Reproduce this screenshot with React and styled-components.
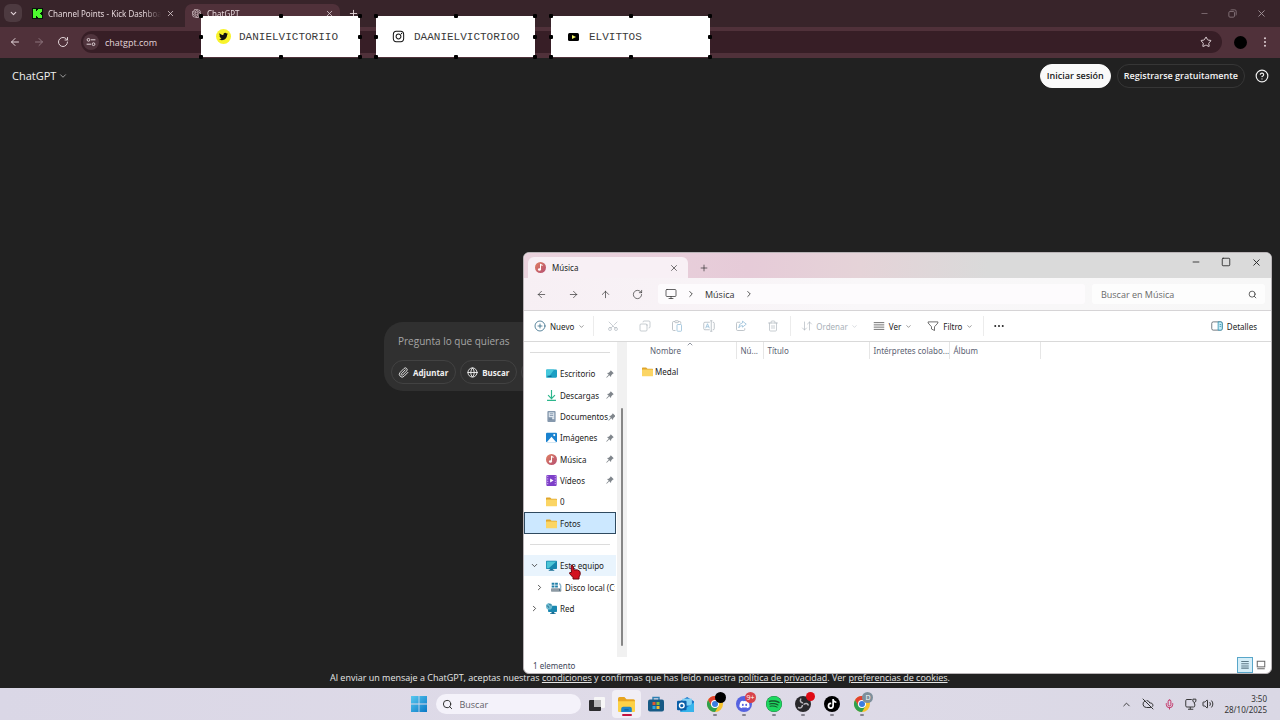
import { useState } from "react";
import styled, { createGlobalStyle, css } from "styled-components";
import {
  ArrowDownUp,
  ArrowLeft,
  ArrowRight,
  ArrowUp,
  ChevronDown,
  ChevronRight,
  ChevronUp,
  CircleHelp,
  CirclePlus,
  CloudOff,
  Copy,
  Globe,
  Lightbulb,
  Mic,
  Minus,
  Monitor,
  Paperclip,
  Plus,
  RotateCw,
  Scissors,
  Search,
  Square,
  Star,
  Trash2,
  Volume2,
  X,
} from "lucide-react";
import {
  FaDiscord,
  FaInstagram,
  FaSpotify,
  FaTiktok,
  FaTwitter,
} from "react-icons/fa";
import { RiOpenaiFill } from "react-icons/ri";

const GlobalStyle = createGlobalStyle`
  * {
    box-sizing: border-box;
  }
  body {
    margin: 0;
    font-family: "Open Sans", "Noto Sans", sans-serif;
    font-size: 8px;
  }
  button, input {
    font: inherit;
    color: inherit;
    border: none;
    background: none;
    padding: 0;
    margin: 0;
  }
  input:focus {
    outline: none;
  }
  svg {
    display: block;
    flex-shrink: 0;
  }
`;

// Noto stays readable at 8px
const smallText = css`
  font-family: "Noto Sans", "Open Sans", sans-serif;
  font-size: 8px;
`;

const Desktop = styled.div`
  position: relative;
  display: flex;
  flex-direction: column;
  min-height: 100vh;
  overflow: hidden;
  background: #212121;
`;

/* ---------- Chrome ---------- */

const TabStrip = styled.div`
  display: flex;
  align-items: flex-end;
  height: 27px;
  padding-left: 4px;
  background: #38242a;
  color: #e3d5d9;
`;

const TabSearch = styled.button`
  display: flex;
  align-items: center;
  justify-content: center;
  width: 18px;
  height: 18px;
  margin: 0 4px 5px 0;
  border-radius: 6px;
  background: #4d3a40;
`;

const BrowserTab = styled.div`
  ${smallText}
  display: flex;
  align-items: center;
  gap: 5px;
  width: ${(props) => (props.$active ? "155px" : "159px")};
  height: 23px;
  padding: 0 ${(props) => (props.$active ? "6px" : "10px")} 4px 6px;
  border-radius: 7px 7px 0 0;
  background: ${(props) => (props.$active ? "#50313a" : "transparent")};

  .title {
    flex: 1;
    overflow: hidden;
    white-space: nowrap;
    mask-image: linear-gradient(90deg, #000 85%, transparent);
  }
  button {
    display: flex;
  }
`;

const NewTab = styled.button`
  display: flex;
  margin: 0 8px 8px;
`;

const WindowButtons = styled.div`
  display: flex;
  align-items: center;
  gap: ${(props) => props.$gap};
  margin-left: auto;
  padding-right: ${(props) => props.$right};
  align-self: center;

  button {
    display: flex;
  }
`;

const ChromeBar = styled.div`
  display: flex;
  align-items: center;
  gap: 12px;
  height: 31px;
  padding: 0 9px 1px;
  background: #50313a;
  color: #e3d5d9;

  > button {
    display: flex;
  }
`;

const Omnibox = styled.label`
  display: flex;
  flex: 1;
  align-items: center;
  gap: 6px;
  height: 22px;
  padding: 0 10px 0 2px;
  border-radius: 11px;
  background: #371e26;
  color: #e3d5d9;
  font-size: 9px;

  .site {
    display: flex;
    align-items: center;
    justify-content: center;
    width: 16px;
    height: 16px;
    border-radius: 50%;
    background: #50343d;
  }
  input {
    flex: 1;
    min-width: 0;
  }
`;

const Avatar = styled.span`
  width: 13px;
  height: 13px;
  border-radius: 50%;
  background: #000;
`;

/* ---------- ChatGPT ---------- */

const ChatPage = styled.main`
  display: flex;
  flex: 1;
  flex-direction: column;
  align-items: center;
  background: #212121;
  color: #f0f0f0;
`;

const ChatHeader = styled.header`
  display: flex;
  align-items: center;
  gap: 6px;
  width: 100%;
  height: 35px;
  padding: 0 11px 0 12px;

  .model {
    display: flex;
    align-items: center;
    gap: 2px;
    margin-right: auto;
    font-size: 11px;
  }
  .help {
    display: flex;
    margin-left: 4px;
  }
`;

const PillButton = styled.button`
  height: 24px;
  padding: 0 6px;
  border: 1px solid ${(props) => (props.$primary ? "#f9f9f9" : "#363636")};
  border-radius: 12px;
  background: ${(props) => (props.$primary ? "#f9f9f9" : "transparent")};
  color: ${(props) => (props.$primary ? "#1a1a1a" : "#f5f5f5")};
  font-size: 9px;
  font-weight: 600;
  white-space: nowrap;
`;

const ChatCenter = styled.div`
  display: flex;
  flex: 1;
  align-items: center;
  justify-content: center;
  width: 100%;
  padding-bottom: 50px;
`;

const Composer = styled.form`
  display: flex;
  flex-direction: column;
  justify-content: space-between;
  width: 40%;
  height: 69px;
  padding: 12px 7px 7px;
  border-radius: 19px;
  background: #303030;

  input {
    width: 100%;
    padding: 0 7px;
    font-size: 10px;
  }
  input::placeholder {
    color: #a5a5a5;
    opacity: 1;
  }
  .actions {
    display: flex;
    gap: 4px;
  }
`;

const ActionButton = styled.button`
  ${smallText}
  display: flex;
  align-items: center;
  gap: 4px;
  height: 24px;
  padding: 0 7px 0 6px;
  border: 1px solid #424242;
  border-radius: 12px;
  color: #f0f0f0;
  font-weight: 700;
`;

const Terms = styled.p`
  margin: 0;
  padding-bottom: 2px;
  font-size: 9px;
  line-height: 16px;
  color: #e6e6e6;

  a {
    color: inherit;
  }
`;

/* ---------- Social labels ---------- */

const Labels = styled.div`
  position: absolute;
  top: 16px;
  left: 201px;
  display: flex;
  gap: 16px;
`;

const Label = styled.div`
  position: relative;
  display: flex;
  align-items: center;
  gap: 8px;
  width: 159px;
  height: 41px;
  padding-left: 15px;
  background: #fff;
  color: #3a3a3a;
  font-family: "Liberation Mono", monospace;
  font-size: 11px;

  .icon {
    display: flex;
    align-items: center;
    justify-content: center;
    width: 15px;
    height: 15px;
    border-radius: 50%;
    background: ${(props) => props.$disc || "transparent"};
    color: #111;
  }
`;

const Handle = styled.span`
  position: absolute;
  left: ${(props) => props.$x};
  top: ${(props) => props.$y};
  width: 4px;
  height: 4px;
  margin: -2px;
  border-radius: 1px;
  background: #000;
`;

/* ---------- Explorer ---------- */

const ExplorerWindow = styled.section`
  ${smallText}
  position: absolute;
  top: 252px;
  left: 523px;
  right: 8px;
  bottom: 46px;
  display: flex;
  flex-direction: column;
  overflow: hidden;
  border: 1px solid #b9b4b7;
  border-radius: 6px;
  background: #fff;
  color: #222;
`;

const TitleBar = styled.div`
  display: flex;
  align-items: flex-end;
  height: 25px;
  padding-left: 4px;
  background: linear-gradient(90deg, #ead3dd, #e6cbd8 30%, #e5d3d8 45%, #dadada 62%);

  > ${WindowButtons} {
    padding-bottom: 7px;
  }
`;

const ExplorerTab = styled.div`
  display: flex;
  align-items: center;
  gap: 6px;
  width: 160px;
  height: 21px;
  margin-right: 11px;
  padding: 0 9px 0 7px;
  border-radius: 6px 6px 0 0;
  background: #f8f0f5;

  button {
    display: flex;
    margin-left: auto;
  }
`;

const PlainButton = styled.button`
  display: flex;
  align-items: center;
  gap: ${(props) => props.$gap || "0"};
  color: ${(props) => (props.$muted ? "#a9b1b8" : "inherit")};
`;

const ExplorerNewTab = styled(PlainButton)`
  margin-bottom: 5px;
`;

const AddressRow = styled.div`
  display: flex;
  align-items: center;
  height: 33px;
  padding: 0 6px 0 12px;
  background: linear-gradient(90deg, #f7eff4, #f9f7f9 45%, #f7f7f7);
  border-bottom: 1px solid #d6d4d6;
  color: #333;

  > button {
    margin-right: 21px;
  }
`;

const Path = styled.nav`
  display: flex;
  flex: 1;
  align-items: center;
  gap: 9px;
  height: 20px;
  padding-left: 7px;
  margin-right: 7px;
  margin-left: -6px;
  border-radius: 3px;
  background: #fdfbfd;
  font-family: "Open Sans", "Noto Sans", sans-serif;
  font-size: 9px;
`;

const SearchField = styled.label`
  display: flex;
  align-items: center;
  width: 173px;
  height: 20px;
  padding: 0 8px 0 9px;
  border-radius: 3px;
  background: #fdfdfd;
  font-family: "Open Sans", "Noto Sans", sans-serif;
  font-size: 9px;

  input {
    flex: 1;
    min-width: 0;
  }
  input::placeholder {
    color: #6b6b6b;
    opacity: 1;
  }
`;

const CommandBar = styled.div`
  display: flex;
  align-items: center;
  height: 31px;
  padding: 0 14px 0 10px;
  border-bottom: 1px solid #d9d9d9;

  .tools {
    display: flex;
    gap: 20px;
    padding: 0 11px 0 13px;
  }
  .menus {
    display: flex;
    gap: 15px;
    padding: 0 10px;
  }
  .more {
    margin-left: 9px;
  }
  .details {
    margin-left: auto;
  }
`;

const Divider = styled.span`
  width: 1px;
  height: 20px;
  margin-left: ${(props) => props.$space || "0"};
  background: #ececec;
`;

const ExplorerBody = styled.div`
  display: flex;
  flex: 1;
  min-height: 0;
`;

const Tree = styled.ul`
  display: grid;
  grid-auto-rows: 1fr;
  width: 92px;
  height: 277px;
  margin: 0 1px 0 0;
  padding: 0;
  list-style: none;
`;

const TreeItem = styled.li`
  display: flex;
  align-items: center;
  gap: 3px;
  overflow: hidden;
  white-space: nowrap;
  padding-left: ${(props) => (props.$child ? "10px" : "5px")};
  border: 1px solid transparent;

  .arrow {
    flex-shrink: 0;
    width: 13px;
  }
  .pin {
    margin-left: auto;
    margin-right: 1px;
  }
  ${(props) =>
    props.$tight &&
    css`
      .pin {
        margin-left: -3px;
      }
    `}
  ${(props) =>
    props.$selected &&
    css`
      background: #cce8ff;
      border-color: #2f4a60;
    `}
  ${(props) =>
    props.$hover &&
    css`
      background: #e9f4fd;
    `}
`;

const TreeLine = styled.li`
  align-self: center;
  height: 1px;
  margin: 0 6px;
  background: #dcdcdc;
`;

const Scrollbar = styled.div`
  display: flex;
  justify-content: center;
  width: 10px;
  padding: 66px 0 11px;
  background: #f1f1f1;

  span {
    width: 2px;
    border-radius: 1px;
    background: #868686;
  }
`;

const Files = styled.div`
  flex: 1;
  min-width: 0;
`;

const FileTable = styled.table`
  width: 413px;
  table-layout: fixed;
  border-collapse: collapse;

  th {
    position: relative;
    height: 17px;
    padding: 0 4px;
    border-right: 1px solid #e6e6e6;
    color: #5b6272;
    font-weight: 400;
    text-align: left;
    white-space: nowrap;
  }
  th:first-child {
    padding-left: 23px;
  }
  th svg {
    position: absolute;
    top: -2px;
    left: 59px;
  }
  td {
    height: 24px;
    padding: 0 0 0 15px;
  }
  td span {
    display: flex;
    align-items: center;
    gap: 2px;
  }
`;

const StatusBar = styled.div`
  display: flex;
  align-items: center;
  height: 16px;
  padding: 0 2px 0 9px;
  color: #3d4658;

  button {
    display: flex;
    align-items: center;
    justify-content: center;
    width: 16px;
    height: 16px;
  }
  button.on {
    margin-left: auto;
    border: 1px solid #58a6c9;
    background: #d5eef8;
  }
`;

const Pointer = styled.svg`
  position: absolute;
  top: 564px;
  left: 568px;
`;

/* ---------- Taskbar ---------- */

const Taskbar = styled.footer`
  display: grid;
  grid-template-columns: 1fr auto 1fr;
  align-items: center;
  height: 32px;
  background: linear-gradient(90deg, #dad7e6, #dfdbe8 50%, #dad8e5);
  color: #333;
`;

const TaskCenter = styled.div`
  grid-column: 2;
  display: flex;
  align-items: center;
  gap: 9px;

  > button {
    display: flex;
    margin-left: 7px;
  }
`;

const TaskSearch = styled.label`
  display: flex;
  align-items: center;
  gap: 7px;
  width: 145px;
  height: 20px;
  padding: 0 6px;
  border-radius: 10px;
  background: #f4f2fa;
  font-size: 9px;

  input {
    flex: 1;
    min-width: 0;
  }
  input::placeholder {
    color: #5f5f66;
    opacity: 1;
  }
`;

const Apps = styled.div`
  display: grid;
  grid-template-columns: repeat(10, 1fr);
  width: 294px;
  margin-left: -7px;
`;

const AppButton = styled.button`
  position: relative;
  display: flex;
  align-items: center;
  justify-content: center;
  height: 28px;
  border-radius: 4px;
  background: ${(props) => (props.$open ? "#f1eff6" : "transparent")};

  &::after {
    content: "";
    position: absolute;
    bottom: 2px;
    left: 50%;
    width: ${(props) => (props.$open ? "10px" : "4px")};
    height: 2px;
    transform: translateX(-50%);
    border-radius: 1px;
    background: ${(props) =>
      props.$open ? "#c4143f" : props.$running ? "#85828e" : "transparent"};
  }
`;

const Badge = styled.span`
  position: absolute;
  top: 2px;
  right: 3px;
  width: ${(props) => props.$size || "11px"};
  height: ${(props) => props.$size || "11px"};
  border-radius: 50%;
  background: ${(props) => props.$color};
  color: #fff;
  font-size: 7px;
  line-height: 11px;
  text-align: center;
`;

const Disc = styled.span`
  display: flex;
  align-items: center;
  justify-content: center;
  width: 16px;
  height: 16px;
  border-radius: 50%;
  background: ${(props) => props.$color};
  color: ${(props) => props.$ink || "#fff"};
`;

const Tray = styled.div`
  display: flex;
  align-items: center;
  justify-content: flex-end;
  gap: 10px;
  padding-right: 13px;

  time {
    ${smallText}
    line-height: 11px;
    text-align: right;
    white-space: pre-line;
  }
  .pair {
    display: flex;
    gap: 5px;
  }
`;

/* ---------- Drawings ---------- */

const Svg = ({ size = 11, children }) => (
  <svg width={size} height={size} viewBox="0 0 16 16" fill="none" aria-hidden="true">
    {children}
  </svg>
);

const FolderIcon = () => (
  <Svg>
    <path d="M0 3q0-1 1-1h5l2 2h7q1 0 1 1v3H0z" fill="#e0a62c" />
    <rect y="5" width="16" height="10" rx="1" fill="#fbd564" />
  </Svg>
);

const DesktopIcon = () => (
  <Svg>
    <rect y="2" width="16" height="12" rx="1.500" fill="#1a9fc4" />
    <path d="M0 3.500Q0 2 1.500 2H12L3 14H1.500Q0 14 0 12.500z" fill="#45c8dc" />
    <path d="M2 12h6" stroke="#0b5c88" strokeWidth="1.500" />
  </Svg>
);

const DownloadIcon = () => (
  <Svg>
    <path d="M8 0v12M3 7.500L8 12.500L13 7.500M1.500 15.200H14.500" stroke="#2cb68c" strokeWidth="1.700" />
  </Svg>
);

const DocumentIcon = () => (
  <Svg>
    <rect x="2" width="12" height="16" rx="1.500" fill="#8598ad" />
    <rect x="4" y="2" width="8" height="7" fill="#dfe7ef" />
    <path d="M5.500 4h5M5.500 6.500h5M4.500 12h7" stroke="#6b8099" />
    <rect x="9" y="9" width="3" height="3" fill="#dfe7ef" />
  </Svg>
);

const ImageIcon = () => (
  <Svg>
    <rect y="1" width="16" height="14" rx="1.500" fill="#1a82cf" />
    <path d="M1 15L8 7L15 15z" fill="#fff" />
    <circle cx="12" cy="4.500" r="1.500" fill="#fff" />
  </Svg>
);

const MusicIcon = () => (
  <Svg>
    <defs>
      <linearGradient id="music" x1="0" y1="0" x2="1" y2="1">
        <stop offset="0" stopColor="#e08062" />
        <stop offset="1" stopColor="#b54f72" />
      </linearGradient>
    </defs>
    <circle cx="8" cy="8" r="8" fill="url(#music)" />
    <ellipse cx="6.500" cy="11" rx="2.200" ry="1.900" fill="#fff" />
    <path d="M8 11V3.500L11 5" stroke="#fff" strokeWidth="1.500" />
  </Svg>
);

const VideoIcon = () => (
  <Svg>
    <rect x="0.500" width="15" height="16" rx="1.500" fill="#7d3fc8" />
    <path d="M2.500 1v14M13.500 1v14" stroke="#c9a3f0" strokeWidth="1.600" strokeDasharray="1.800 1.800" />
    <path d="M6 5L11 8L6 11z" fill="#fff" />
  </Svg>
);

const ComputerIcon = () => (
  <Svg>
    <rect y="1" width="16" height="12" rx="1" fill="#1585ad" />
    <path d="M1 2h14L4 12H1z" fill="#4cc5d6" />
    <path d="M6 13h4v1h2v1.500H4V14h2z" fill="#176d94" />
  </Svg>
);

const DriveIcon = () => (
  <Svg>
    <path d="M1 1h4v3H1zM6 1h4v3H6zM1 5h4v3H1zM6 5h4v3H6z" fill="#1f7fa8" />
    <rect y="9" width="15" height="5" rx="1" fill="#8d9aa4" />
    <path d="M12 2q4 3 1 10" stroke="#8fb7ce" strokeWidth="2" />
    <circle cx="12.500" cy="11.500" r="1" fill="#2a4d63" />
  </Svg>
);

const NetworkIcon = () => (
  <Svg>
    <rect x="3" y="4" width="13" height="9" rx="1" fill="#1a87b0" />
    <path d="M8 13h4v2h2v1H6v-1h2z" fill="#176d94" />
    <circle cx="4.500" cy="5" r="4.500" fill="#6cbad0" />
    <path d="M1 4q3 0 3 3M4 1q1 2 4 2" stroke="#246b8a" strokeWidth="1.200" />
  </Svg>
);

const PinIcon = () => (
  <svg className="pin" width="8" height="8" viewBox="0 0 16 16" aria-hidden="true">
    <path d="M9.500 0.500L15.500 6.500L13.500 7.500L10.500 10.500L10 14L6.500 10.500L1.500 15.500L0.500 14.500L5.500 9.500L2 6L5.500 5.500L8.500 2.500z" fill="#7f858b" />
  </svg>
);

const PasteIcon = () => (
  <Svg size={12}>
    <path d="M6 14H3.500Q2 14 2 12.500v-9Q2 2 3.500 2H5M10 2h1.500Q13 2 13 3.500V5" stroke="currentColor" />
    <rect x="5" y="1" width="5" height="2.500" rx="1" stroke="currentColor" />
    <rect x="8" y="6" width="6" height="9" rx="1" stroke="#8fb9d6" />
  </Svg>
);

const RenameIcon = () => (
  <Svg size={12}>
    <path d="M9 3H2.500Q1 3 1 4.500v7Q1 13 2.500 13H9M13 3h.500Q15 3 15 4.500v7Q15 13 13.500 13H13M11 1v14M9.500 1h3M9.500 15h3" stroke="currentColor" />
    <path d="M3.500 11L6 5L8.500 11M4.500 9h3" stroke="#8fb9d6" />
  </Svg>
);

const ShareIcon = () => (
  <Svg size={12}>
    <path d="M7 3H3.500Q2 3 2 4.500v8Q2 14 3.500 14h8q1.500 0 1.500-1.500V11" stroke="currentColor" />
    <path d="M10 1.500L15 5.500L10 9.500V7.500Q6.500 7 5 10.500Q5 4.500 10 3.800z" stroke="#8fb9d6" />
  </Svg>
);

const LinesIcon = () => (
  <Svg size={12}>
    <path d="M1 3.500h14M1 6.500h14M1 9.500h14M1 12.500h14" stroke="#444" />
  </Svg>
);

const FunnelIcon = () => (
  <Svg size={12}>
    <path d="M1.500 2.500h13V4L10 9v5l-4-2V9L1.500 4z" stroke="#444" />
  </Svg>
);

const DetailsIcon = () => (
  <Svg size={12}>
    <rect x="1" y="2.500" width="14" height="11" rx="2" stroke="#47515a" />
    <path d="M9.500 2.500H13q2 0 2 2v7q0 2-2 2H9.500z" fill="#c9ebf5" stroke="#238cac" />
    <path d="M11.500 6h2M11.500 8.500h2" stroke="#238cac" />
  </Svg>
);

const TuneIcon = () => (
  <Svg size={10}>
    <circle cx="4" cy="4.500" r="2.200" stroke="currentColor" strokeWidth="1.600" />
    <circle cx="12" cy="11.500" r="2.200" stroke="currentColor" strokeWidth="1.600" />
    <path d="M8 4.500h7M1 11.500h7" stroke="currentColor" strokeWidth="1.600" />
  </Svg>
);

const KickIcon = () => (
  <svg width="11" height="11" viewBox="0 0 11 11" aria-hidden="true">
    <rect width="11" height="11" fill="#07140a" />
    <path d="M1 1h3v2h1V2h1V1h4v3H9v1H8v1h1v1h1v3H6V9H5V8H4v2H1z" fill="#4dfb2f" />
  </svg>
);

const YoutubeIcon = () => (
  <svg width="11" height="8" viewBox="0 0 11 8" aria-hidden="true">
    <rect width="11" height="8" rx="1.500" fill="#000" />
    <path d="M4 2L8 4L4 6z" fill="#f2f56a" />
  </svg>
);

const RestoreIcon = () => (
  <Svg size={9}>
    <rect x="1.500" y="4.500" width="10" height="10" rx="2" stroke="#8b7a80" strokeWidth="1.500" />
    <path d="M4.500 2Q5 1.500 6 1.500h6q2.500 0 2.500 2.500v6q0 1-.500 1.500" stroke="#8b7a80" strokeWidth="1.500" />
  </Svg>
);

const DotsIcon = ({ vertical }) => (
  <Svg size={12}>
    {[3, 8, 13].map((n) => (
      <circle key={n} cx={vertical ? 8 : n} cy={vertical ? n : 8} r="1.300" fill="currentColor" />
    ))}
  </Svg>
);

const WindowsIcon = () => (
  <Svg size={16}>
    <defs>
      <linearGradient id="win" x1="0" y1="0" x2="16" y2="16" gradientUnits="userSpaceOnUse">
        <stop offset="0" stopColor="#58c8ef" />
        <stop offset="1" stopColor="#0878c6" />
      </linearGradient>
    </defs>
    <path d="M0 0h7.600v7.600H0zM8.400 0H16v7.600H8.400zM0 8.400h7.600V16H0zM8.400 8.400H16V16H8.400z" fill="url(#win)" />
  </Svg>
);

const TaskViewIcon = () => (
  <Svg size={16}>
    <rect x="5" y="1" width="11" height="11" rx="1" fill="#f7f7f7" />
    <rect x="0" y="4" width="12" height="11" rx="1" fill="#2c2c2e" />
    <rect x="5" y="4" width="7" height="7" fill="#b9b9bb" />
  </Svg>
);

const ExplorerIcon = () => (
  <Svg size={17}>
    <path d="M0 2.500Q0 1 1.500 1H6l2 2h6.500Q16 3 16 4.500V8H0z" fill="#e7a520" />
    <path d="M0 5h16v9q0 1-1 1H1q-1 0-1-1z" fill="#fcd147" />
    <path d="M3 15v-3q0-2 2-2h6q2 0 2 2v3z" fill="#1b84c9" />
    <path d="M6 13h4" stroke="#0a5f9e" />
  </Svg>
);

const StoreIcon = () => (
  <Svg size={16}>
    <path d="M5 4V1.500h6V4" stroke="#2d7fb2" strokeWidth="1.400" />
    <rect y="3.500" width="16" height="12" rx="2" fill="#175a85" />
    <path d="M4.500 6h3v3h-3z" fill="#e4572e" />
    <path d="M8.500 6h3v3h-3z" fill="#86bd3a" />
    <path d="M4.500 10h3v3h-3z" fill="#31a8e0" />
    <path d="M8.500 10h3v3h-3z" fill="#f3bd2d" />
  </Svg>
);

const OutlookIcon = () => (
  <Svg size={17}>
    <path d="M3 5L9.500 1L16 5v9q0 1-1 1H4q-1 0-1-1z" fill="#1b78c8" />
    <path d="M5 2.500h9V9H5z" fill="#7fd0f5" />
    <path d="M3 15L16 6v8q0 1-1 1z" fill="#35b4ec" />
    <rect y="4.500" width="9" height="9" rx="1" fill="#0b5fa8" />
    <circle cx="4.500" cy="9" r="2.200" stroke="#fff" strokeWidth="1.300" />
  </Svg>
);

const ChromeIcon = () => (
  <Svg size={16}>
    <circle cx="8" cy="8" r="8" fill="#f6c22d" />
    <path d="M8 4h6.930A8 8 0 0 0 1.070 4L4.500 10z" fill="#e2412f" />
    <path d="M1.070 4A8 8 0 0 0 8 16L11.500 10L4.500 10z" fill="#2fa04e" />
    <circle cx="8" cy="8" r="4" fill="#fff" />
    <circle cx="8" cy="8" r="3" fill="#3b7de0" />
  </Svg>
);

const ObsIcon = () => (
  <Svg size={16}>
    <circle cx="8" cy="8" r="8" fill="#29282b" />
    <path d="M8 7Q4 6 6 2.500M8.500 8.500Q12 6 13.500 9.500M7.500 9Q7 13 3 11.500" stroke="#b9b6bb" strokeWidth="1.500" />
  </Svg>
);

const EthernetIcon = () => (
  <Svg size={12}>
    <path d="M9 2H2.500Q1 2 1 3.500v7Q1 12 2.500 12h9q1.500 0 1.500-1.500V8M7 12v3M4 15h7" stroke="currentColor" strokeWidth="1.300" />
    <path d="M10.500 1.500h4v3l-2 1.500l-2-1.500zM12.500 6v2" stroke="currentColor" strokeWidth="1.300" />
  </Svg>
);

const handles = [
  ["0%", "0%"],
  ["50%", "0%"],
  ["100%", "0%"],
  ["0%", "50%"],
  ["100%", "50%"],
  ["0%", "100%"],
  ["50%", "100%"],
  ["100%", "100%"],
];

const socials = [
  { name: "DANIELVICTORIIO", icon: <FaTwitter size={9} />, disc: "#f8f32b" },
  { name: "DAANIELVICTORIOO", icon: <FaInstagram size={13} /> },
  { name: "ELVITTOS", icon: <YoutubeIcon /> },
];

const places = [
  { line: true, id: "top" },
  { name: "Escritorio", icon: <DesktopIcon />, pinned: true },
  { name: "Descargas", icon: <DownloadIcon />, pinned: true },
  { name: "Documentos", icon: <DocumentIcon />, pinned: true, tight: true },
  { name: "Imágenes", icon: <ImageIcon />, pinned: true },
  { name: "Música", icon: <MusicIcon />, pinned: true },
  { name: "Vídeos", icon: <VideoIcon />, pinned: true },
  { name: "0", icon: <FolderIcon /> },
  { name: "Fotos", icon: <FolderIcon />, selected: true },
  { line: true, id: "bottom" },
  { name: "Este equipo", icon: <ComputerIcon />, arrow: "down", hover: true },
  { name: "Disco local (C:)", icon: <DriveIcon />, arrow: "right", child: true },
  { name: "Red", icon: <NetworkIcon />, arrow: "right" },
];

const tools = [
  { name: "Cortar", icon: <Scissors size={12} strokeWidth={1.25} style={{ rotate: "270deg" }} /> },
  { name: "Copiar", icon: <Copy size={12} strokeWidth={1.25} style={{ rotate: "90deg" }} /> },
  { name: "Pegar", icon: <PasteIcon /> },
  { name: "Cambiar nombre", icon: <RenameIcon /> },
  { name: "Compartir", icon: <ShareIcon /> },
  { name: "Eliminar", icon: <Trash2 size={12} strokeWidth={1.25} /> },
];

const apps = [
  { name: "Vista de tareas", icon: <TaskViewIcon /> },
  { name: "Explorador de archivos", icon: <ExplorerIcon />, open: true },
  { name: "Microsoft Store", icon: <StoreIcon /> },
  { name: "Outlook", icon: <OutlookIcon /> },
  { name: "Chrome", icon: <ChromeIcon />, running: true, badge: { color: "#000" } },
  {
    name: "Discord",
    icon: (
      <Disc $color="#5562e0">
        <FaDiscord size={11} />
      </Disc>
    ),
    running: true,
    badge: { color: "#d8424a", text: "9+" },
  },
  {
    name: "Spotify",
    icon: (
      <Disc $color="#14582c" $ink="#1ed760">
        <FaSpotify size={16} />
      </Disc>
    ),
    running: true,
  },
  { name: "OBS", icon: <ObsIcon />, running: true, badge: { color: "#e00a14", size: "9px" } },
  {
    name: "TikTok",
    icon: (
      <Disc $color="#000">
        <FaTiktok size={10} />
      </Disc>
    ),
    running: true,
  },
  { name: "Chrome D", icon: <ChromeIcon />, running: true, badge: { color: "#7d8f9b", text: "D" } },
];

const Chrome = () => {
  const [url, setUrl] = useState("chatgpt.com");

  return (
    <>
      <TabStrip>
        <TabSearch aria-label="Buscar pestañas">
          <ChevronDown size={9} strokeWidth={3} />
        </TabSearch>
        <BrowserTab>
          <KickIcon />
          <span className="title">Channel Points - Kick Dashboard</span>
          <button aria-label="Cerrar pestaña">
            <X size={9} />
          </button>
        </BrowserTab>
        <BrowserTab $active>
          <RiOpenaiFill size={11} />
          <span className="title">ChatGPT</span>
          <button aria-label="Cerrar pestaña">
            <X size={9} />
          </button>
        </BrowserTab>
        <NewTab aria-label="Nueva pestaña">
          <Plus size={11} />
        </NewTab>
        <WindowButtons $gap="19px" $right="13px">
          <button aria-label="Minimizar">
            <Minus size={9} color="#8b7a80" />
          </button>
          <button aria-label="Restaurar">
            <RestoreIcon />
          </button>
          <button aria-label="Cerrar">
            <X size={11} color="#a3959a" />
          </button>
        </WindowButtons>
      </TabStrip>
      <ChromeBar>
        <button aria-label="Atrás">
          <ArrowLeft size={12} />
        </button>
        <button aria-label="Adelante">
          <ArrowRight size={12} color="#8d757d" />
        </button>
        <button aria-label="Recargar">
          <RotateCw size={12} />
        </button>
        <Omnibox>
          <span className="site">
            <TuneIcon />
          </span>
          <input
            aria-label="Dirección"
            value={url}
            onChange={(event) => setUrl(event.target.value)}
          />
          <Star size={12} />
        </Omnibox>
        <Avatar />
        <button aria-label="Menú">
          <DotsIcon vertical />
        </button>
      </ChromeBar>
    </>
  );
};

const Chat = () => (
  <ChatPage>
    <ChatHeader>
      <button className="model">
        ChatGPT <ChevronDown size={10} color="#b4b4b4" />
      </button>
      <PillButton $primary>Iniciar sesión</PillButton>
      <PillButton>Registrarse gratuitamente</PillButton>
      <button className="help" aria-label="Ayuda">
        <CircleHelp size={14} />
      </button>
    </ChatHeader>
    <ChatCenter>
      <Composer onSubmit={(event) => event.preventDefault()}>
        <input aria-label="Mensaje" placeholder="Pregunta lo que quieras" />
        <div className="actions">
          <ActionButton type="button">
            <Paperclip size={11} /> Adjuntar
          </ActionButton>
          <ActionButton type="button">
            <Globe size={11} /> Buscar
          </ActionButton>
          <ActionButton type="button" aria-label="Razonar">
            <Lightbulb size={11} />
          </ActionButton>
        </div>
      </Composer>
    </ChatCenter>
    <Terms>
      Al enviar un mensaje a ChatGPT, aceptas nuestras{" "}
      <a href="#condiciones">condiciones</a> y confirmas que has leído nuestra{" "}
      <a href="#privacidad">política de privacidad</a>. Ver{" "}
      <a href="#cookies">preferencias de cookies</a>.
    </Terms>
  </ChatPage>
);

const Explorer = () => (
  <ExplorerWindow>
    <TitleBar>
      <ExplorerTab>
        <MusicIcon />
        Música
        <button aria-label="Cerrar pestaña">
          <X size={10} strokeWidth={1.5} />
        </button>
      </ExplorerTab>
      <ExplorerNewTab aria-label="Nueva pestaña">
        <Plus size={10} strokeWidth={1.5} />
      </ExplorerNewTab>
      <WindowButtons $gap="20px" $right="9px">
        <button aria-label="Minimizar">
          <Minus size={10} />
        </button>
        <button aria-label="Maximizar">
          <Square size={10} />
        </button>
        <button aria-label="Cerrar">
          <X size={11} />
        </button>
      </WindowButtons>
    </TitleBar>
    <AddressRow>
      <PlainButton aria-label="Atrás">
        <ArrowLeft size={11} strokeWidth={1.5} />
      </PlainButton>
      <PlainButton aria-label="Adelante">
        <ArrowRight size={11} strokeWidth={1.5} />
      </PlainButton>
      <PlainButton aria-label="Subir">
        <ArrowUp size={11} strokeWidth={1.5} />
      </PlainButton>
      <PlainButton aria-label="Actualizar">
        <RotateCw size={11} strokeWidth={1.5} />
      </PlainButton>
      <Path aria-label="Ruta">
        <Monitor size={12} strokeWidth={1.5} />
        <ChevronRight size={10} strokeWidth={2} />
        <span>Música</span>
        <ChevronRight size={10} strokeWidth={2} />
      </Path>
      <SearchField>
        <input aria-label="Buscar en Música" placeholder="Buscar en Música" />
        <Search size={9} strokeWidth={2} />
      </SearchField>
    </AddressRow>
    <CommandBar>
      <PlainButton $gap="4px">
        <CirclePlus size={12} strokeWidth={1.5} color="#27607f" />
        Nuevo
        <ChevronDown size={7} strokeWidth={1.5} />
      </PlainButton>
      <Divider $space="8px" />
      <div className="tools">
        {tools.map((tool) => (
          <PlainButton key={tool.name} aria-label={tool.name} $muted>
            {tool.icon}
          </PlainButton>
        ))}
      </div>
      <Divider />
      <div className="menus">
        <PlainButton $gap="3px" $muted>
          <ArrowDownUp size={12} strokeWidth={1.25} />
          Ordenar
          <ChevronDown size={7} strokeWidth={1.5} />
        </PlainButton>
        <PlainButton $gap="4px">
          <LinesIcon />
          Ver
          <ChevronDown size={7} strokeWidth={1.5} />
        </PlainButton>
        <PlainButton $gap="4px">
          <FunnelIcon />
          Filtro
          <ChevronDown size={7} strokeWidth={1.5} />
        </PlainButton>
      </div>
      <Divider />
      <PlainButton className="more" aria-label="Más opciones">
        <DotsIcon />
      </PlainButton>
      <PlainButton className="details" $gap="4px">
        <DetailsIcon />
        Detalles
      </PlainButton>
    </CommandBar>
    <ExplorerBody>
      <Tree>
        {places.map((place) =>
          place.line ? (
            <TreeLine key={place.id} />
          ) : (
            <TreeItem
              key={place.name}
              $child={place.child}
              $selected={place.selected}
              $hover={place.hover}
              $tight={place.tight}
            >
              <span className="arrow">
                {place.arrow === "down" && <ChevronDown size={9} />}
                {place.arrow === "right" && <ChevronRight size={9} />}
              </span>
              {place.icon}
              {place.name}
              {place.pinned && <PinIcon />}
            </TreeItem>
          )
        )}
      </Tree>
      <Scrollbar>
        <span />
      </Scrollbar>
      <Files>
        <FileTable>
          <colgroup>
            <col width="109" />
            <col width="27" />
            <col width="106" />
            <col width="80" />
            <col width="91" />
          </colgroup>
          <thead>
            <tr>
              <th>
                Nombre
                <ChevronUp size={8} strokeWidth={2} />
              </th>
              <th>Nú...</th>
              <th>Título</th>
              <th>Intérpretes colabo...</th>
              <th>Álbum</th>
            </tr>
          </thead>
          <tbody>
            <tr>
              <td colSpan={5}>
                <span>
                  <FolderIcon /> Medal
                </span>
              </td>
            </tr>
          </tbody>
        </FileTable>
      </Files>
    </ExplorerBody>
    <StatusBar>
      1 elemento
      <button className="on" aria-label="Vista de detalles">
        <Svg size={10}>
          <path d="M2 2.500h12M2 6h12M2 9.500h12M2 13h12" stroke="#5c7885" strokeWidth="1.700" />
        </Svg>
      </button>
      <button aria-label="Vista de iconos">
        <Svg size={10}>
          <rect x="2" y="2" width="12" height="9" stroke="#666" strokeWidth="1.600" />
          <path d="M2 14h12" stroke="#666" strokeWidth="1.600" />
        </Svg>
      </button>
    </StatusBar>
  </ExplorerWindow>
);

const App = () => {
  return (
    <Desktop>
      <GlobalStyle />
      <Chrome />
      <Chat />
      <Labels>
        {socials.map((social) => (
          <Label key={social.name} $disc={social.disc}>
            <span className="icon">{social.icon}</span>
            {social.name}
            {handles.map(([x, y]) => (
              <Handle key={x + y} $x={x} $y={y} />
            ))}
          </Label>
        ))}
      </Labels>
      <Explorer />
      <Taskbar>
        <TaskCenter>
          <button aria-label="Inicio">
            <WindowsIcon />
          </button>
          <TaskSearch>
            <Search size={11} color="#222" />
            <input aria-label="Buscar" placeholder="Buscar" />
          </TaskSearch>
          <Apps>
            {apps.map((app) => (
              <AppButton
                key={app.name}
                aria-label={app.name}
                $open={app.open}
                $running={app.running}
              >
                {app.icon}
                {app.badge && (
                  <Badge $color={app.badge.color} $size={app.badge.size}>
                    {app.badge.text}
                  </Badge>
                )}
              </AppButton>
            ))}
          </Apps>
        </TaskCenter>
        <Tray>
          <ChevronUp size={11} />
          <CloudOff size={12} />
          <Mic size={11} color="#c2255c" />
          <span className="pair">
            <EthernetIcon />
            <Volume2 size={12} />
          </span>
          <time dateTime="2025-10-28T03:50">{"3:50\n28/10/2025"}</time>
        </Tray>
      </Taskbar>
      <Pointer width="13" height="16" viewBox="0 0 13 16" aria-hidden="true">
        <path
          d="M3 1.500Q4 .500 5 2L6 6q4-1 6 1.500q1 3-1 5.500v2H5v-1.500L1.500 9.500Q1 8 3.500 8.500z"
          fill="#d3121f"
          stroke="#6d0a12"
        />
      </Pointer>
    </Desktop>
  );
};

export default App;
